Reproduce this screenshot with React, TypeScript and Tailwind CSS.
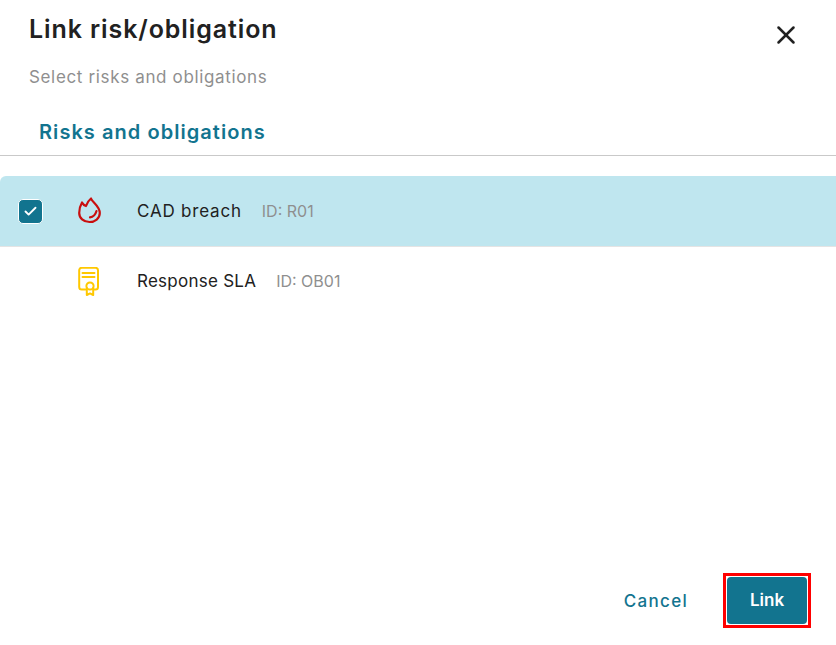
import React from 'react';
import { Check, X } from 'lucide-react';

const FlameIcon: React.FC = () => (
  <svg width="24" height="28" viewBox="0 0 24 28" fill="none" stroke="#c90f0f" strokeWidth="2.2" strokeLinecap="round" strokeLinejoin="round">
    <path d="M13 1.500C14 5 21.800 9 21.800 16C21.800 21.500 17 25 11.500 25C5.500 25 1.200 21 1.200 16C1.200 12 2.500 8 4 5.500C5 7.500 6.500 8.500 8 9C9 6 10.500 3.500 13 1.500Z" />
    <path d="M12 20.300C15 20 17.500 17.500 18.500 14" />
  </svg>
);

const CertificateIcon: React.FC = () => (
  <svg width="24" height="30" viewBox="0 0 24 30" fill="none" stroke="#ffc800" strokeWidth="2" strokeLinecap="round" strokeLinejoin="round">
    <path d="M7.500 22.500H3.700A2.500 2.500 0 0 1 1.200 20V3.300A2.500 2.500 0 0 1 3.700 .8H17.500A2.500 2.500 0 0 1 20 3.300V20A2.500 2.500 0 0 1 17.500 22.500H16.500" />
    <path d="M4.500 6h12M4.500 10h12" />
    <circle cx="12" cy="19" r="3.600" />
    <path d="M8.800 21v7l3.200-1.600 3.200 1.600v-7" />
  </svg>
);

const idText = 'text-base text-[#8f8f8f]';

const App: React.FC = () => {
  return (
    <div className="w-[836px] h-[645px] bg-white flex flex-col overflow-hidden font-['Inter','Liberation_Sans',sans-serif]">
      <div className="h-[155px] shrink-0 flex flex-col border-b border-[#c9c9c9] box-content">
        <div className="flex items-start justify-between pl-[29px] pr-[35px] pt-[13px]">
          <h1 className="text-[25px] leading-[32px] font-semibold tracking-[0.9px] text-[#212121]">Link risk/obligation</h1>
          <X className="mt-[7px] text-[#212121]" size={30} strokeWidth={2} />
        </div>
        <p className="pl-[29px] mt-[15px] text-[17px] leading-[24px] tracking-[0.65px] text-[#8f8f8f]">Select risks and obligations</p>
        <h2 className="pl-[39px] mt-[29px] text-[20px] leading-[28px] font-semibold tracking-[1.05px] text-[#12748f]">Risks and obligations</h2>
      </div>

      <div className="flex-1 pt-[20px]">
        <div className="h-[71px] flex items-center bg-[#bfe6ef] rounded-tl-[6px] border-b border-[#e4e4e4]">
          <div className="w-[60px] pl-[18px]">
            <div className="w-[25px] h-[25px] rounded-[5px] bg-[#12748f] border border-white flex items-center justify-center">
              <Check className="text-white" size={15} strokeWidth={3} />
            </div>
          </div>
          <div className="w-[60px] flex justify-center"><FlameIcon /></div>
          <span className="ml-[17px] mt-[2px] text-[17px] tracking-[0.8px] text-[#212121]">CAD breach</span>
          <span className={`ml-5 ${idText}`}>ID: R01</span>
        </div>
        <div className="h-[70px] flex items-center">
          <div className="w-[60px]" />
          <div className="w-[60px] flex justify-center"><CertificateIcon /></div>
          <span className="ml-[17px] text-[17px] tracking-[0.25px] text-[#212121]">Response SLA</span>
          <span className={`ml-5 mb-[2px] ${idText}`}>ID: OB01</span>
        </div>
      </div>

      <div className="flex items-center justify-end pr-[25px] pb-[17px]">
        <button className="mr-[35px] mt-[2px] text-[17px] font-medium tracking-[1.3px] text-[#12748f]">Cancel</button>
        <div className="border-[3px] border-[#ff0000] p-px">
          <button className="block w-[80px] h-[47px] rounded-[4px] bg-[#12748f] text-white text-[17px] font-semibold">Link</button>
        </div>
      </div>
    </div>
  );
};

export default App;
